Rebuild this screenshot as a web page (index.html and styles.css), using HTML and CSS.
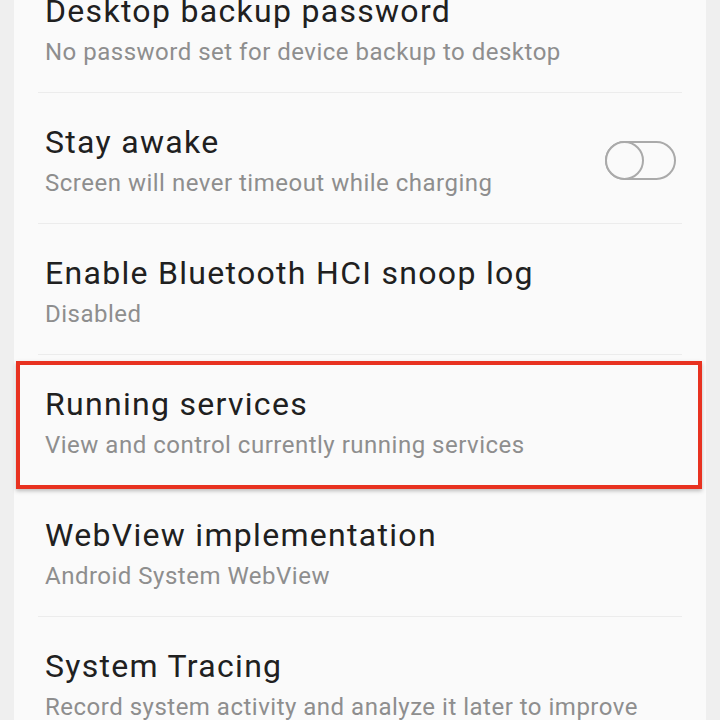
FILE: index.html
```html
<!DOCTYPE html>
<html>
<head>
	<meta charset="utf-8">
	<title>Developer options</title>
	<link rel="stylesheet" href="styles.css">
</head>
<body>
	<div class="list">
		<div class="item">
			<div class="text">
				<div class="title">Desktop backup password</div>
				<div class="summary">No password set for device backup to desktop</div>
			</div>
		</div>

		<div class="item">
			<div class="text">
				<div class="title">Stay awake</div>
				<div class="summary">Screen will never timeout while charging</div>
			</div>
			<span class="switch"><span class="thumb"></span></span>
		</div>

		<div class="item">
			<div class="text">
				<div class="title">Enable Bluetooth HCI snoop log</div>
				<div class="summary">Disabled</div>
			</div>
		</div>

		<div class="item marked">
			<div class="text">
				<div class="title">Running services</div>
				<div class="summary">View and control currently running services</div>
			</div>
			<span class="highlight"></span>
		</div>

		<div class="item">
			<div class="text">
				<div class="title">WebView implementation</div>
				<div class="summary">Android System WebView</div>
			</div>
		</div>

		<div class="item">
			<div class="text">
				<div class="title">System Tracing</div>
				<div class="summary">Record system activity and analyze it later to improve performance</div>
			</div>
		</div>
	</div>
</body>
</html>
```

FILE: styles.css
```css
body {
	margin:0;
	background:#efefef;
	font-family:Roboto, "Noto Sans", Arial, sans-serif;
	height:720px;
	overflow:hidden;
}

/* ----------- card ----------- */
.list {
	margin:-38px 14px 0 14px;
	background:#fafafa;
	padding:0 24px;
}

.item {
	position:relative;
	display:flex;
	align-items:center;
	padding:29px 6px 25px 7px;
	border-bottom:solid 1px #ececec;
}

.text { flex:1; }

.title {
	font-size:32px;
	line-height:40px;
	letter-spacing:1.3px;
	color:#202020;
}

.summary {
	margin-top:6px;
	font-size:24px;
	line-height:30px;
	letter-spacing:0.5px;
	color:#8e8e8e;
}

/* ----------- switch ----------- */
.switch {
	display:flex;
	width:67px;
	height:35px;
	border:solid 2px #aaaaaa;
	border-radius:20px;
}

.thumb {
	width:35px;
	height:35px;
	margin:-2px;
	border:solid 2px #aaaaaa;
	border-radius:50%;
	background:#fafafa;
}

/* ----------- annotation ----------- */
.highlight {
	position:absolute;
	left:-22px;
	right:-20px;
	top:6px;
	bottom:-4px;
	border:solid 4px #e83220;
	box-shadow:0 2px 4px rgba(0,0,0,0.25);
}
```
